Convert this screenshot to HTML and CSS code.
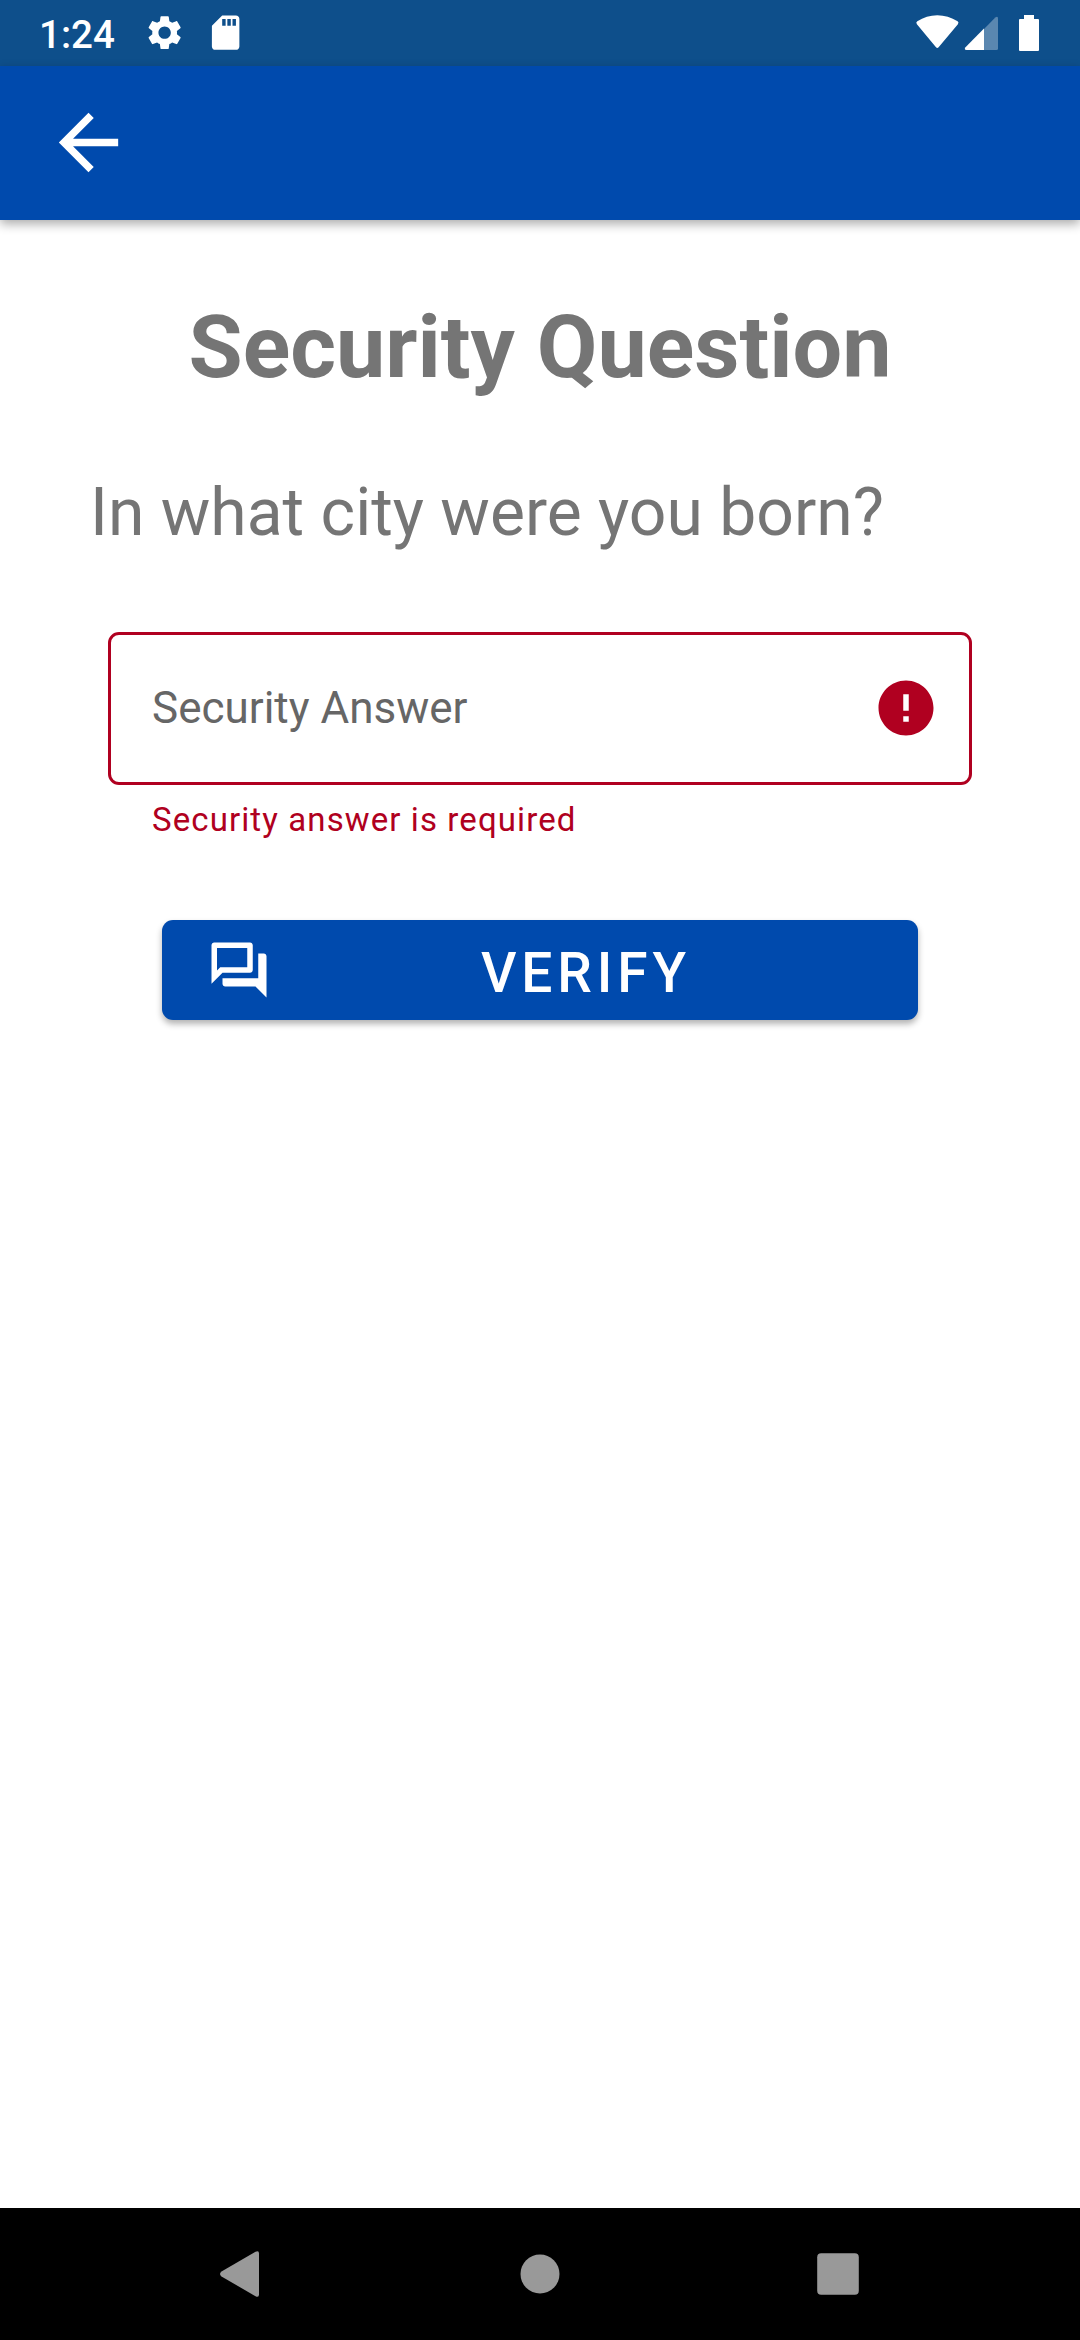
FILE: index.html
```html
<!DOCTYPE html>
<html lang="en">
<head>
<meta charset="utf-8">
<title>Security Question</title>
<link rel="stylesheet" href="styles.css">
</head>
<body>
<div class="screen">
  <div class="status-bar">
    <span class="clock">1:24</span>
    <svg class="gear" viewBox="0 0 24 24"><path d="M19.14 12.94c.04-.3.06-.61.06-.94 0-.32-.02-.64-.07-.94l2.03-1.58c.18-.14.23-.41.12-.61l-1.92-3.32c-.12-.22-.37-.29-.59-.22l-2.39.96c-.5-.38-1.03-.7-1.62-.94l-.36-2.54c-.04-.24-.24-.41-.48-.41h-3.84c-.24 0-.43.17-.47.41l-.36 2.54c-.59.24-1.13.57-1.62.94l-2.39-.96c-.22-.08-.47 0-.59.22L2.74 8.87c-.12.21-.08.47.12.61l2.03 1.58c-.05.3-.09.63-.09.94s.02.64.07.94l-2.03 1.58c-.18.14-.23.41-.12.61l1.92 3.32c.12.22.37.29.59.22l2.39-.96c.5.38 1.03.7 1.62.94l.36 2.54c.05.24.24.41.48.41h3.84c.24 0 .44-.17.47-.41l.36-2.54c.59-.24 1.13-.56 1.62-.94l2.39.96c.22.08.47 0 .59-.22l1.92-3.32c.12-.22.07-.47-.12-.61l-2.01-1.58zM12 15.6c-1.98 0-3.6-1.62-3.6-3.6s1.62-3.6 3.6-3.6 3.6 1.62 3.6 3.6-1.62 3.6-3.6 3.6z"/></svg>
    <svg class="sd-card" viewBox="0 0 24 24"><path d="M18 2h-8L4.02 8 4 20c0 1.100.9 2 2 2h12c1.100 0 2-.9 2-2V4c0-1.100-.9-2-2-2zm-6 6h-2V4h2v4zm3 0h-2V4h2v4zm3 0h-2V4h2v4z"/></svg>
    <svg class="signals" viewBox="0 0 124 38">
      <path d="M1.900 10.200Q.5 8.500 2.300 7.300Q11.500 1.200 22.300 1.200T42.600 7.300Q44.200 8.500 42.900 10.200L23.600 33.200Q22.300 34.800 21 33.200Z"/>
      <path class="dim" d="M69 14.900L80.300 3.600Q83 1.600 83 4.800V34.500Q83 36 81.500 36H69Z"/>
      <path d="M69 14.600V36H51.500Q48.700 35.700 50.500 33.200Z"/>
      <path d="M109 1h10v4h4q1 0 1 1v30q0 1-1 1h-18q-1 0-1-1V6q0-1 1-1h4z"/>
    </svg>
  </div>
  <header class="app-bar">
    <svg class="back" viewBox="0 0 24 24"><path d="M20 11H7.830l5.590-5.590L12 4l-8 8 8 8 1.410-1.410L7.830 13H20v-2z"/></svg>
  </header>
  <main class="content">
    <h1 class="title">Security Question</h1>
    <p class="question">In what city were you born?</p>
    <div class="field">
      <span class="hint">Security Answer</span>
      <svg class="error-icon" viewBox="0 0 24 24"><path d="M12 2C6.480 2 2 6.480 2 12s4.480 10 10 10 10-4.480 10-10S17.520 2 12 2zm1 15h-2v-2h2v2zm0-4h-2V7h2v6z"/></svg>
    </div>
    <p class="error">Security answer is required</p>
    <button class="verify" type="button">
      <svg class="chat" viewBox="0 0 24 24"><path d="M15 4v7H5.170L4 12.170V4h11m1-2H3c-.55 0-1 .45-1 1v14l4-4h10c.55 0 1-.45 1-1V3c0-.55-.45-1-1-1zm5 4h-2v9H6v2c0 .55.45 1 1 1h11l4 4V7c0-.55-.45-1-1-1z"/></svg>
      <span class="verify-label">VERIFY</span>
    </button>
  </main>
  <nav class="nav-bar">
    <svg class="nav-icon" viewBox="0 0 48 48"><path d="M39.500 1.800Q43 .2 43 3.500V44.500Q43 47.800 39.500 46.200L5.500 26.500Q2.500 24 5.500 21.500Z"/></svg>
    <svg class="nav-icon" viewBox="0 0 48 48"><circle cx="24" cy="24" r="19.500"/></svg>
    <svg class="nav-icon" viewBox="0 0 48 48"><rect x="1.200" y="3.200" width="41.600" height="41.600" rx="4"/></svg>
  </nav>
</div>
</body>
</html>
```
FILE: styles.css
```css
* {
  box-sizing: border-box;
}

body {
  margin: 0;
  background: #fff;
  font-family: Roboto, sans-serif;
}

svg {
  display: block;
  flex: none;
  fill: #fff;
}

.screen {
  display: flex;
  flex-direction: column;
  width: 1080px;
  height: 2340px;
}

.status-bar {
  display: flex;
  align-items: center;
  height: 66px;
  padding: 0 41px 0 39px;
  background: #0e4f8b;
}

.clock {
  width: 105px;
  color: #fff;
  font-size: 38.5px;
  font-weight: 500;
  line-height: 66px;
  padding-top: 3px;
}

.gear,
.sd-card {
  width: 41.25px;
  height: 41.25px;
}

.sd-card {
  margin-left: 20px;
}

.signals {
  width: 124px;
  height: 38px;
  margin-left: auto;
}

.dim {
  fill: #5a87b0;
}

.app-bar {
  display: flex;
  align-items: center;
  height: 154px;
  padding: 0 0 1px 44px;
  background: #004aad;
  box-shadow: 0 4px 10px rgba(0, 0, 0, 0.33);
}

.back {
  width: 89px;
  height: 89px;
}

.content {
  display: flex;
  flex: 1;
  flex-direction: column;
  padding: 75px 108px 0;
}

.title {
  margin: 0;
  color: #757575;
  font-size: 88px;
  font-weight: 700;
  line-height: 104px;
  text-align: center;
}

.question {
  margin: 75px 0 0 -18px;
  color: #757575;
  font-size: 66px;
  line-height: 78px;
}

.field {
  display: flex;
  align-items: center;
  justify-content: space-between;
  height: 153px;
  margin-top: 80px;
  padding: 0 30px 1px 41px;
  border: 3px solid #b00020;
  border-radius: 11px;
}

.hint {
  color: #666;
  font-size: 44px;
  line-height: 52px;
}

.error-icon {
  width: 66px;
  height: 66px;
  fill: #b00020;
}

.error {
  margin: 15px 0 0 44px;
  color: #b00020;
  font-size: 33px;
  line-height: 40px;
  letter-spacing: 1.1px;
}

.verify {
  display: flex;
  align-items: center;
  width: 756px;
  height: 100px;
  margin: 80px 0 0 54px;
  padding: 0 44px;
  border: 0;
  border-radius: 11px;
  background: #004aad;
  box-shadow: 0 4px 6px rgba(0, 0, 0, 0.3);
  color: #fff;
  font-family: inherit;
}

.chat {
  width: 66px;
  height: 66px;
}

.verify-label {
  flex: 1;
  padding: 6px 0 0 26px;
  font-size: 55px;
  font-weight: 500;
  line-height: 64px;
  letter-spacing: 4.9px;
  text-align: center;
}

.nav-bar {
  display: flex;
  align-items: center;
  justify-content: space-between;
  height: 132px;
  padding: 0 216px;
  background: #000;
}

.nav-icon {
  width: 48px;
  height: 48px;
  fill: #999;
}
```
